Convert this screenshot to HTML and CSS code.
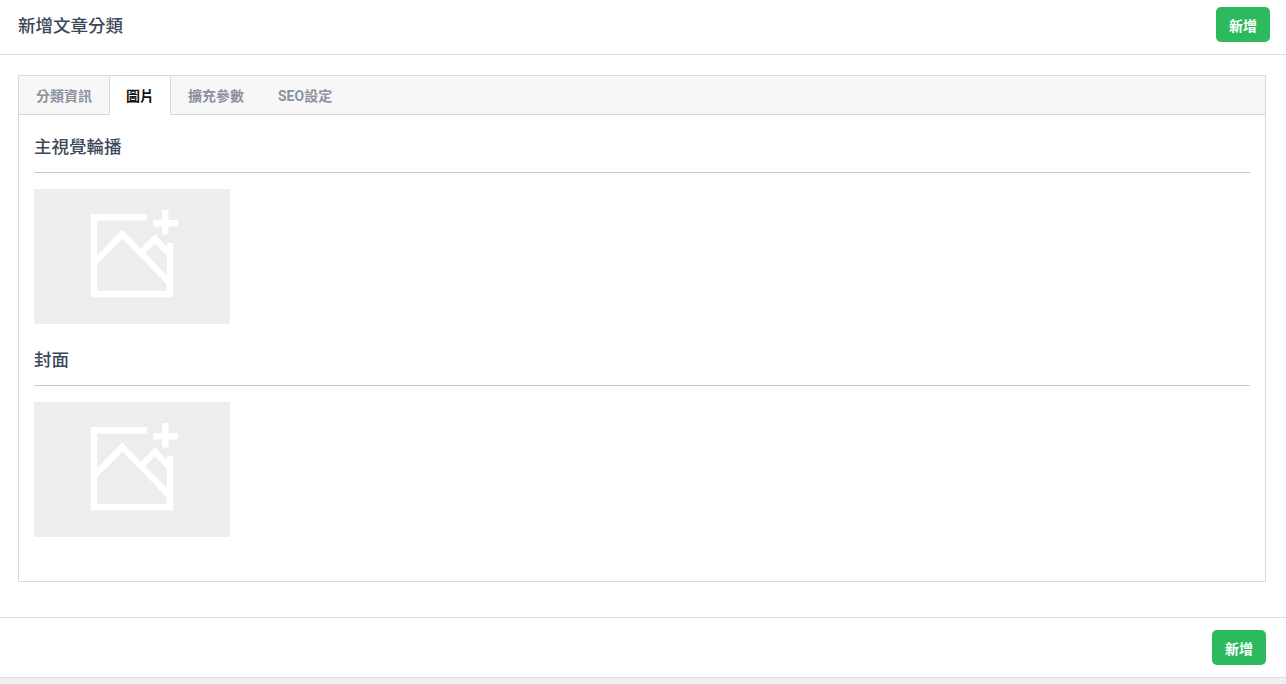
FILE: index.html
```html
<!DOCTYPE html>
<html lang="zh-Hant">
<head>
<meta charset="utf-8">
<title>新增文章分類</title>
<link rel="stylesheet" href="styles.css">
</head>
<body>
<div class="page">
  <header class="top-bar">
    <h1 class="page-title">新增文章分類</h1>
    <button class="btn-add" type="button">新增</button>
  </header>
  <main class="content">
    <section class="card">
      <nav class="tabs">
        <a class="tab">分類資訊</a>
        <a class="tab tab-active">圖片</a>
        <a class="tab">擴充參數</a>
        <a class="tab">SEO設定</a>
      </nav>
      <div class="tab-body">
        <h2 class="section-title">主視覺輪播</h2>
        <div class="upload">
          <svg class="upload-icon" viewBox="0 0 196 135" width="196" height="135" fill="none" stroke="#fff" stroke-width="6.400">
            <path d="M113 28.300H60V105H136V54"/>
            <path d="M119.500 34.300H144M131.300 21V45.500"/>
            <path d="M60 74L88.300 45L136 94"/>
            <path d="M106.500 64L121 50L136 65.500"/>
          </svg>
        </div>
        <h2 class="section-title">封面</h2>
        <div class="upload">
          <svg class="upload-icon" viewBox="0 0 196 135" width="196" height="135" fill="none" stroke="#fff" stroke-width="6.400">
            <path d="M113 28.300H60V105H136V54"/>
            <path d="M119.500 34.300H144M131.300 21V45.500"/>
            <path d="M60 74L88.300 45L136 94"/>
            <path d="M106.500 64L121 50L136 65.500"/>
          </svg>
        </div>
      </div>
    </section>
  </main>
  <footer class="bottom-bar">
    <button class="btn-add" type="button">新增</button>
  </footer>
</div>
</body>
</html>
```

FILE: styles.css
```css
* { box-sizing: border-box; }
html, body { margin: 0; height: 100%; }
body {
  background: #eef0f2;
  font-family: "Noto Sans CJK TC", "Noto Sans", sans-serif;
  color: #3c4858;
  overflow: hidden;
}
.page { background: #fff; height: 678px; border-bottom: 1px solid #dcdfe2; }
.top-bar {
  height: 55px;
  display: flex;
  align-items: flex-start;
  justify-content: space-between;
  padding: 7px 16px 0 18px;
  border-bottom: 1px solid #dcdcdc;
}
.page-title { margin: 0; font-size: 17.5px; font-weight: 500; line-height: 35px; color: #3c4858; }
.btn-add {
  width: 54px;
  height: 35px;
  padding: 0;
  border: 0;
  border-radius: 5px;
  background: #2dba5e;
  color: #fff;
  font: 700 14px "Noto Sans CJK TC", sans-serif;
}
.content { padding: 20px 20px 35px 18px; height: 563px; border-bottom: 1px solid #dcdcdc; }
.card { height: 507px; border: 1px solid #d8d8d8; }
.tabs {
  display: flex;
  height: 39px;
  background: #f7f7f7;
  border-bottom: 1px solid #d8d8d8;
}
.tab {
  padding: 1px 17px 0;
  font-family: Roboto, "Noto Sans CJK TC", sans-serif;
  font-size: 14px;
  font-weight: 700;
  line-height: 38px;
  color: #8b929e;
}
.tab-active {
  height: 39px;
  background: #fff;
  color: #111;
  border-left: 1px solid #d8d8d8;
  border-right: 1px solid #d8d8d8;
  padding: 1px 16px 0;
}
.tab-body { padding: 15px 15px 0; }
.section-title {
  margin: 0 0 16px;
  height: 43px;
  font-size: 17.5px;
  font-weight: 500;
  line-height: 32px;
  color: #3c4858;
  border-bottom: 1px solid #c8c8c8;
}
.upload { width: 196px; height: 135px; margin-bottom: 19px; background: #ecedef; }
.upload-icon { display: block; }
.bottom-bar {
  height: 59px;
  display: flex;
  justify-content: flex-end;
  padding: 12px 20px 0 0;
}
```
